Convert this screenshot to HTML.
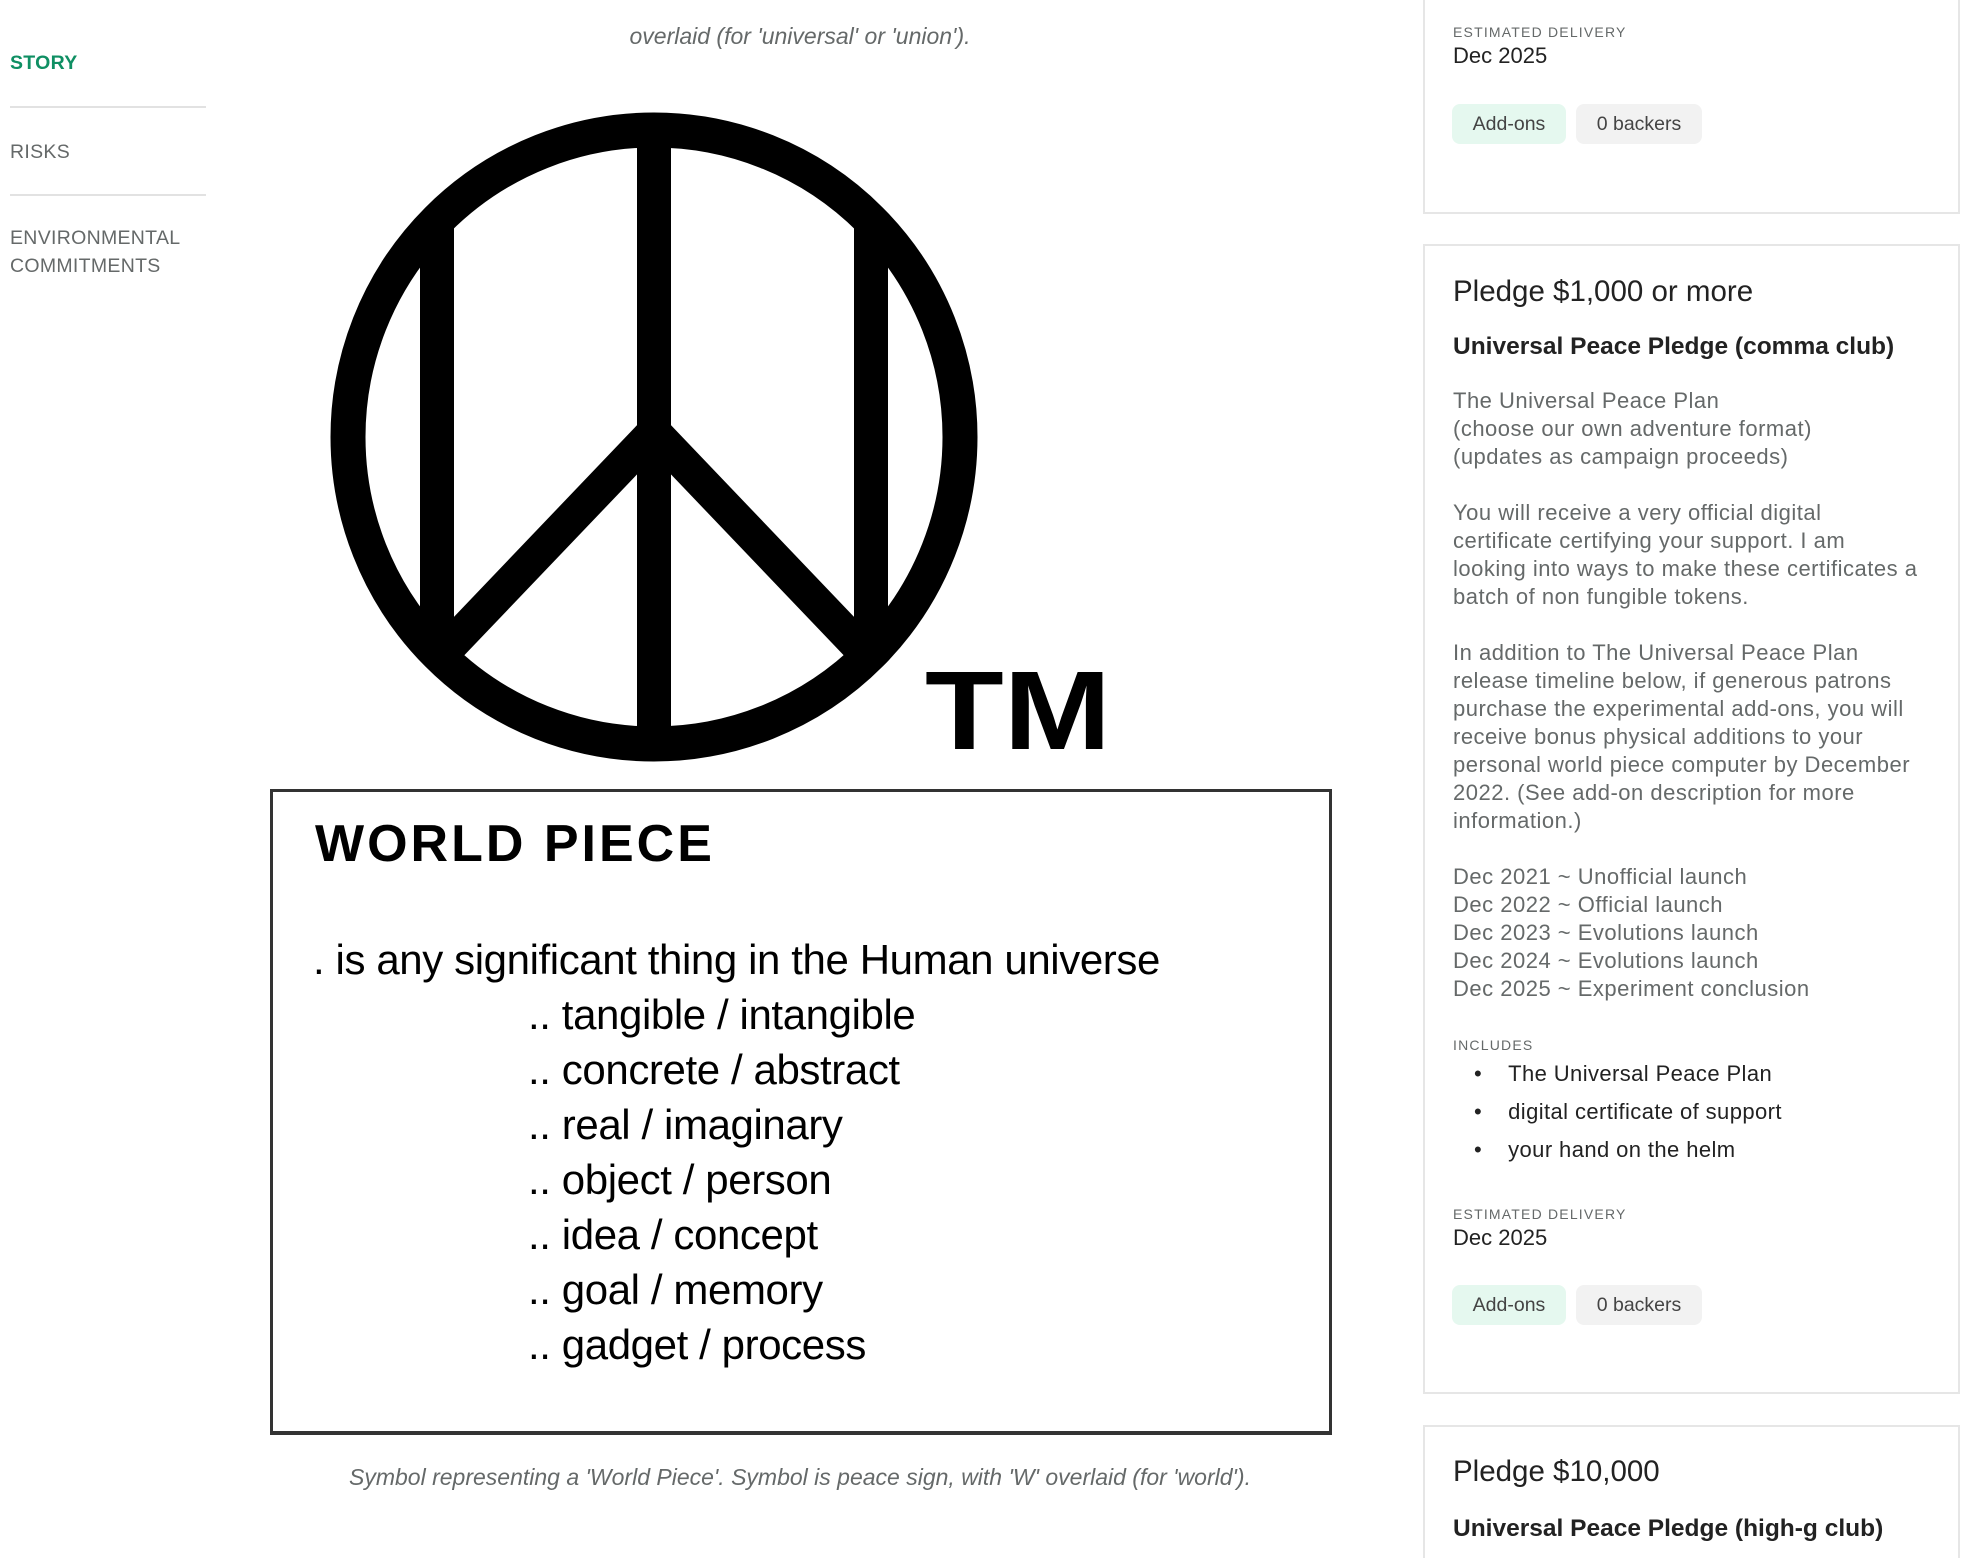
<!DOCTYPE html>
<html><head><meta charset="utf-8">
<style>
*{margin:0;padding:0;box-sizing:border-box}
html,body{width:1980px;height:1558px;overflow:hidden;background:#fff}
body{position:relative;font-family:"Liberation Sans",sans-serif;color:#222}
.a{position:absolute;white-space:nowrap}
.nav{font-size:19.5px;color:#656969;letter-spacing:.3px;line-height:28px}
.hr{position:absolute;left:10px;width:196px;height:2px;background:#e2e2e2}
.cap{font-style:italic;color:#656969;font-size:23px;line-height:28px;text-align:center;width:1100px;left:250px}
.card{position:absolute;left:1423px;width:537px;border:2px solid #e6e6e6;background:#fff}
.lbl{font-size:14px;letter-spacing:1.2px;color:#656969;line-height:18px}
.dec{font-size:22px;line-height:26px;color:#222}
.pill{position:absolute;height:40px;border-radius:8px;font-size:19.5px;line-height:40px;text-align:center;color:#444}
.body{font-size:22px;letter-spacing:.5px;line-height:28px;color:#656969}
.gs{font-size:42px;line-height:55px;color:#000;letter-spacing:-.4px}
</style></head><body>

<div class="a nav" style="left:10px;top:49px;color:#0f8f63;font-weight:bold">STORY</div>
<div class="hr" style="top:106px"></div>
<div class="a nav" style="left:10px;top:138px">RISKS</div>
<div class="hr" style="top:194px"></div>
<div class="a nav" style="left:10px;top:224px">ENVIRONMENTAL<br>COMMITMENTS</div>

<div class="a cap" style="top:22px">overlaid (for 'universal' or 'union').</div>

<svg class="a" style="left:0;top:0" width="1400" height="800" viewBox="0 0 1400 800">
<defs><clipPath id="c"><ellipse cx="654" cy="437" rx="310" ry="311"/></clipPath></defs>
<g clip-path="url(#c)" stroke="#000" stroke-width="34" fill="none">
<line x1="654" y1="80" x2="654" y2="800"/>
<line x1="437" y1="80" x2="437" y2="640"/>
<line x1="871" y1="80" x2="871" y2="640"/>
<line x1="654" y1="432" x2="400" y2="698"/>
<line x1="654" y1="432" x2="908" y2="698"/>
</g>
<ellipse cx="654" cy="437" rx="306" ry="307" stroke="#000" stroke-width="35" fill="none"/>
<text x="925" y="749" font-family="Liberation Sans" font-weight="bold" font-size="112" fill="#000" textLength="186" lengthAdjust="spacingAndGlyphs">TM</text>
</svg>

<div class="a" style="left:270px;top:789px;width:1062px;height:646px;border:3px solid #333;border-bottom-width:4px"></div>
<div class="a" style="left:315px;top:816px;font-size:52px;font-weight:bold;letter-spacing:3px;color:#000;line-height:56px">WORLD PIECE</div>
<div class="a gs" style="left:313px;top:932px">. is any significant thing in the Human universe</div>
<div class="a gs" style="left:528px;top:987px">.. tangible / intangible</div>
<div class="a gs" style="left:528px;top:1042px">.. concrete / abstract</div>
<div class="a gs" style="left:528px;top:1097px">.. real / imaginary</div>
<div class="a gs" style="left:528px;top:1152px">.. object / person</div>
<div class="a gs" style="left:528px;top:1207px">.. idea / concept</div>
<div class="a gs" style="left:528px;top:1262px">.. goal / memory</div>
<div class="a gs" style="left:528px;top:1317px">.. gadget / process</div>

<div class="a cap" style="top:1463px">Symbol representing a 'World Piece'. Symbol is peace sign, with 'W' overlaid (for 'world').</div>

<!-- card 1 -->
<div class="card" style="top:-10px;height:224px"></div>
<div class="a lbl" style="left:1453px;top:23px">ESTIMATED DELIVERY</div>
<div class="a dec" style="left:1453px;top:43px">Dec 2025</div>
<div class="pill" style="left:1452px;top:104px;width:114px;background:#e5f8ef">Add-ons</div>
<div class="pill" style="left:1576px;top:104px;width:126px;background:#f2f2f2">0 backers</div>

<!-- card 2 -->
<div class="card" style="top:244px;height:1150px"></div>
<div class="a" style="left:1453px;top:275px;font-size:29.5px;line-height:34px;color:#222">Pledge $1,000 or more</div>
<div class="a" style="left:1453px;top:332px;font-size:24.5px;font-weight:bold;line-height:30px;color:#222">Universal Peace Pledge (comma club)</div>
<div class="a body" style="left:1453px;top:387px">The Universal Peace Plan<br>(choose our own adventure format)<br>(updates as campaign proceeds)</div>
<div class="a body" style="left:1453px;top:499px">You will receive a very official digital<br>certificate certifying your support. I am<br>looking into ways to make these certificates a<br>batch of non fungible tokens.</div>
<div class="a body" style="left:1453px;top:639px">In addition to The Universal Peace Plan<br>release timeline below, if generous patrons<br>purchase the experimental add-ons, you will<br>receive bonus physical additions to your<br>personal world piece computer by December<br>2022. (See add-on description for more<br>information.)</div>
<div class="a body" style="left:1453px;top:863px">Dec 2021 ~ Unofficial launch<br>Dec 2022 ~ Official launch<br>Dec 2023 ~ Evolutions launch<br>Dec 2024 ~ Evolutions launch<br>Dec 2025 ~ Experiment conclusion</div>
<div class="a lbl" style="left:1453px;top:1036px">INCLUDES</div>
<div class="a" style="left:1474px;top:1055px;font-size:22px;letter-spacing:.4px;line-height:38px;color:#222">•&nbsp;&nbsp;&nbsp;&nbsp;The Universal Peace Plan<br>•&nbsp;&nbsp;&nbsp;&nbsp;digital certificate of support<br>•&nbsp;&nbsp;&nbsp;&nbsp;your hand on the helm</div>
<div class="a lbl" style="left:1453px;top:1205px">ESTIMATED DELIVERY</div>
<div class="a dec" style="left:1453px;top:1225px">Dec 2025</div>
<div class="pill" style="left:1452px;top:1285px;width:114px;background:#e5f8ef">Add-ons</div>
<div class="pill" style="left:1576px;top:1285px;width:126px;background:#f2f2f2">0 backers</div>

<!-- card 3 -->
<div class="card" style="top:1425px;height:200px"></div>
<div class="a" style="left:1453px;top:1455px;font-size:29.5px;line-height:34px;color:#222">Pledge $10,000</div>
<div class="a" style="left:1453px;top:1514px;font-size:24.5px;font-weight:bold;line-height:30px;color:#222">Universal Peace Pledge (high-g club)</div>
</body></html>
